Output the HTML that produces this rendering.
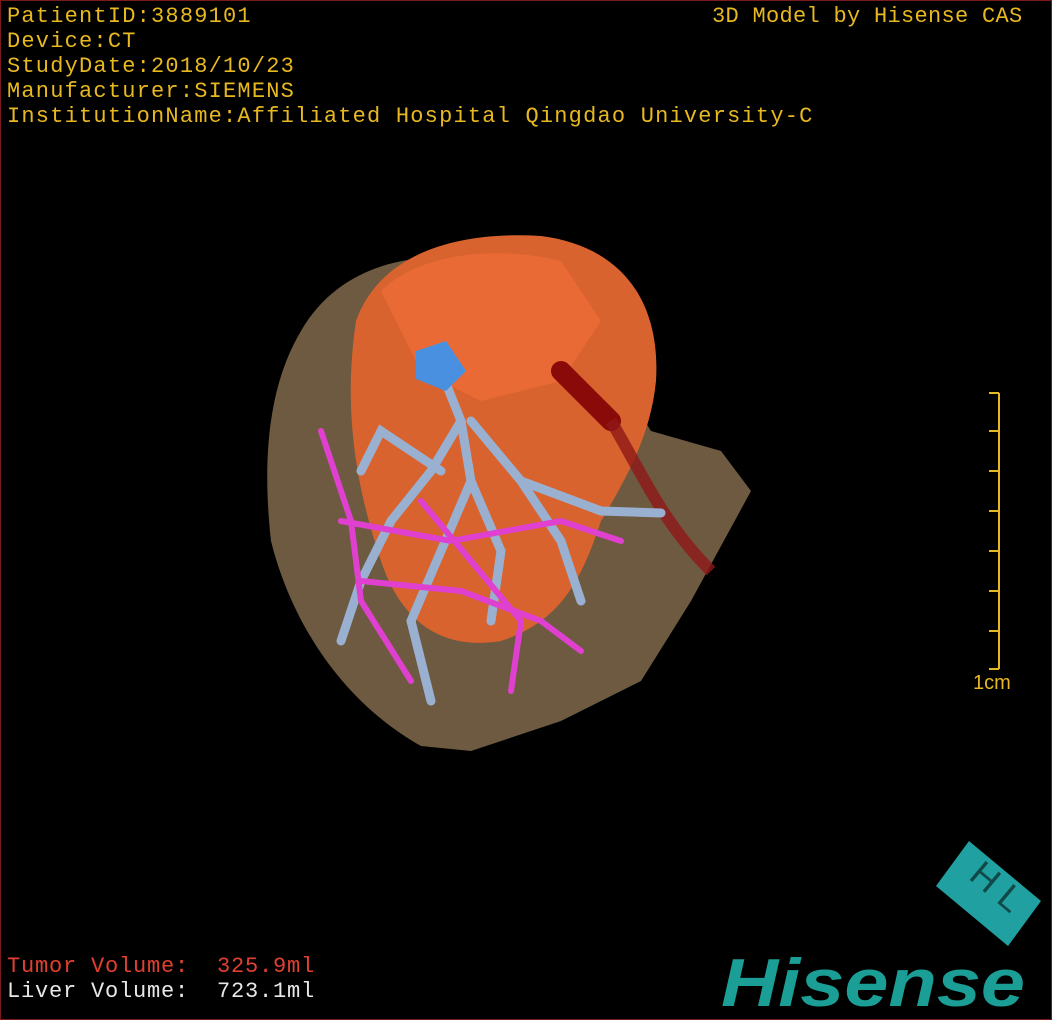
<!DOCTYPE html>
<html><head><style>
body{margin:0;background:#000;}
#c{position:relative;width:1050px;height:1018px;border:1px solid #7a1a1a;background:#000;overflow:hidden;font-family:"Liberation Mono",monospace;}
.t{position:absolute;color:#e8b820;font-size:22px;line-height:25px;white-space:pre;letter-spacing:1.2px}
.r{color:#e04030}
.w{color:#e8e8e8}
</style></head><body><div id="c">
<div class="t" style="left:6px;top:3px">PatientID:3889101
Device:CT
StudyDate:2018/10/23
Manufacturer:SIEMENS
InstitutionName:Affiliated Hospital Qingdao University-C</div>
<div class="t" style="left:711px;top:3px;letter-spacing:0.3px">3D Model by Hisense CAS</div>
<div class="t" style="left:6px;top:953px;letter-spacing:0.8px"><span class="r">Tumor Volume:  325.9ml</span>
<span class="w">Liver Volume:  723.1ml</span></div>
<svg width="1050" height="1018" style="position:absolute;left:0;top:0">
<path d="M300 330 C340 260 420 250 470 260 L600 350 L650 430 L720 450 L750 490 L690 600 L640 680 L560 720 L470 750 L420 745 C340 700 290 620 270 540 C260 450 270 380 300 330Z" fill="#6e5a40"/>
<path d="M355 320 C380 250 460 230 540 235 C620 245 660 300 655 380 C650 430 630 470 600 520 C580 580 560 620 500 640 C440 650 400 620 380 560 C360 500 340 420 355 320Z" fill="#d8632e"/>
<path d="M380 290 C420 250 500 245 560 260 L600 320 L560 380 L480 400 L420 370Z" fill="#e96a35"/>
<path d="M560 370 L610 420" stroke="#8a0a0a" stroke-width="20" stroke-linecap="round"/>
<path d="M610 420 C640 470 660 520 710 570" stroke="#901818" stroke-width="12" fill="none" opacity=".8"/>
<g stroke="#9ab0d0" stroke-width="9" fill="none" stroke-linecap="round">
<path d="M440 370 L460 420 L430 470 L390 520 L360 580 L340 640"/>
<path d="M460 420 L470 480 L440 550 L410 620 L430 700"/>
<path d="M470 420 L520 480 L560 540 L580 600"/>
<path d="M470 480 L500 550 L490 620"/>
<path d="M440 470 L380 430 L360 470"/>
<path d="M520 480 L600 510 L660 512"/>
</g>
<path d="M415 350 L445 340 L465 370 L445 390 L415 378Z" fill="#4a90e0"/>
<g stroke="#e040d0" stroke-width="6" fill="none" stroke-linecap="round">
<path d="M320 430 L350 520 L360 600 L410 680"/>
<path d="M340 520 L450 540 L560 520 L620 540"/>
<path d="M360 580 L460 590 L540 620 L580 650"/>
<path d="M420 500 L520 620 L510 690"/>
</g>
<g stroke="#e8b820" stroke-width="2">
<path d="M998 392 V668 M988 392 H998 M988 430 H998 M988 470 H998 M988 510 H998 M988 550 H998 M988 590 H998 M988 630 H998 M988 668 H998"/>
</g>
<polygon points="968,840 1040,900 1007,945 935,885" fill="#20a0a0"/>
<text x="0" y="0" transform="translate(988,895) rotate(40)" font-family="Liberation Sans" font-size="36" fill="#114848" text-anchor="middle">H L</text>
<text x="720" y="1005" font-family="Liberation Sans" font-weight="bold" font-style="italic" font-size="68" fill="#1a9e96" textLength="304" lengthAdjust="spacingAndGlyphs">Hisense</text>
</svg>
<div class="t" style="left:972px;top:670px;font-family:'Liberation Sans';font-size:20px;letter-spacing:0">1cm</div>
</div></body></html>
